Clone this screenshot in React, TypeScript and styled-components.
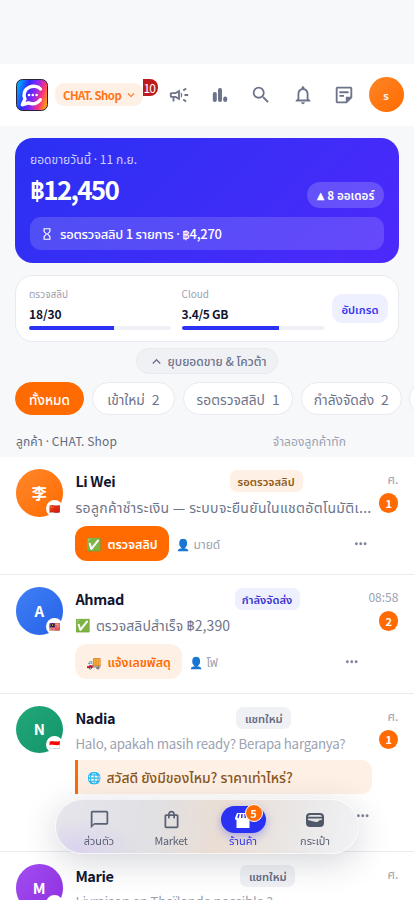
import React from "react";
import styled, { createGlobalStyle, css } from "styled-components";
import {
  MdOutlineCampaign, MdSearch, MdNotificationsNone, MdOutlineStickyNote2, MdHourglassEmpty,
  MdChatBubbleOutline, MdOutlineShoppingBag, MdExpandMore, MdExpandLess, MdMoreHoriz,
} from "react-icons/md";

const Global = createGlobalStyle`
  * { box-sizing: border-box; }
  html, body { margin: 0; padding: 0; background: #f7f8fa; }
  body { width: 414px; height: 900px; overflow: hidden; font-family: "Noto Sans CJK SC", "Noto Sans Thai", "Noto Sans", sans-serif; }
`;

const Screen = styled.main`
  width: 414px; height: 900px; overflow: hidden; padding-top: 64px;
  display: flex; flex-direction: column; background: #f7f8fa; position: relative;
`;

const Text = styled.span<{ $size: number; $color?: string; $weight?: number; $track?: number }>`
  font-size: ${p => p.$size}px;
  line-height: 20px;
  color: ${p => p.$color ?? "inherit"};
  font-weight: ${p => p.$weight ?? 400};
  letter-spacing: ${p => p.$track ?? 0}px;
  white-space: nowrap;
`;
const Symbol = styled.span`
  font-family: "Noto Sans", "DejaVu Sans", sans-serif;
`;
const Triangle = styled.span`
  font: 10px "DejaVu Sans", sans-serif; margin-right: 3px;
`;

const Header = styled.header`
  height: 61.5px; flex: none; display: flex; align-items: center; background: #fff; padding: 0 10.5px 0 16px;
`;
const ShopPill = styled.button`
  width: 88px; height: 23px; flex: none; margin-left: 7px; padding: 0 5px 0 8px; border: 0; border-radius: 9px;
  display: flex; align-items: center; justify-content: space-between; background: #fff0e5; color: #ff7417; font-family: inherit;
  & > svg { flex: none; }
`;
const Alert = styled.div`
  width: 15px; height: 17px; margin-top: -14px; background: #bd1a1d; border-radius: 0 8px 8px 0;
  display: flex; align-items: center; justify-content: flex-end; padding-right: 3px; flex: none;
`;
const HeaderIcons = styled.nav`
  flex: 1; margin-left: 10px; display: flex; gap: 19.2px; align-items: center; color: #6d7489; font-size: 22px;
  & > svg { flex: none; }
`;
const Me = styled.div`
  width: 35px; height: 35px; border-radius: 50%; background: linear-gradient(135deg, #ff8526, #ff6b00); color: #fff;
  display: flex; align-items: center; justify-content: center; flex: none;
`;

const Hero = styled.section`
  height: 124.5px; flex: none; margin: 12.5px 15px 0; padding: 11px 15px; border-radius: 18px;
  background: linear-gradient(135deg, #2a31f2, #4d29fb); display: flex; flex-direction: column; color: #fff;
`;
const HeroRow = styled.div`
  display: flex; justify-content: space-between; align-items: flex-start; height: 47px;
`;
const Amount = styled.div`
  font-size: 26px; font-weight: 700; line-height: 37px; letter-spacing: -1.75px; white-space: nowrap;
`;
const Orders = styled.div`
  width: 77px; height: 26px; margin-top: 12px; border-radius: 13px; background: rgba(255,255,255,.18);
  display: flex; align-items: center; justify-content: center;
`;
const Pending = styled.div`
  height: 33px; border-radius: 11px; background: rgba(255,255,255,.15); display: flex; align-items: center; padding-left: 10px; gap: 6px;
`;

const Quota = styled.section`
  height: 67px; flex: none; margin: 12.5px 15px 0; padding: 0 10px 0 13px; background: #fff; border: 1px solid #e8eaf0; border-radius: 18px;
  display: flex; align-items: center;
`;
const Meter = styled.div`
  width: 142px; margin-right: 10.5px; padding-bottom: 3px; display: flex; flex-direction: column;
`;
const Track = styled.div<{ $value: number }>`
  height: 4.5px; border-radius: 2px; margin-top: 2px;
  background: linear-gradient(to right, #2a31f2 ${p => p.$value}%, #f0f1f6 ${p => p.$value}%);
`;
const Upgrade = styled.button`
  width: 56px; height: 29px; flex: none; border: 0; border-radius: 10px; background: #eef0ff; padding: 0; margin-left: -2px; font-family: inherit;
`;
const Collapse = styled.button`
  width: 142px; height: 26px; flex: none; align-self: center; margin-top: 6px; border: 1px solid #e8eaf0; border-radius: 13px;
  background: #f0f1f5; color: #6d7489; display: flex; align-items: center; justify-content: center; gap: 3px; padding: 0; font-family: inherit;
`;
const Chips = styled.div`
  display: flex; gap: 7.7px; padding-left: 15px; margin-top: 8px; flex: none; overflow: hidden;
`;
const Chip = styled.div<{ $width: number; $active?: boolean }>`
  width: ${p => p.$width}px; height: 33px; flex: none; border-radius: 17px; display: flex; align-items: center; justify-content: center; gap: 7px;
  border: 1px solid ${p => (p.$active ? "#ff6b00" : "#e8eaf0")};
  background: ${p => (p.$active ? "#ff6b00" : "#fff")}; color: ${p => (p.$active ? "#fff" : "#6d7489")};
`;
const SectionHead = styled.div`
  height: 42px; flex: none; display: flex; justify-content: space-between; padding: 16px 68px 0 16px;
`;

const Row = styled.article<{ $height: number }>`
  height: ${p => p.$height}px; flex: none; background: #fff; border-bottom: 1px solid #e9ebf1;
  display: flex; padding: 12px 15.5px 0;
`;
const Avatar = styled.div<{ $from: string; $to: string }>`
  width: 47.5px; height: 47.5px; border-radius: 50%; flex: none; color: #fff; position: relative;
  background: linear-gradient(135deg, ${p => p.$from}, ${p => p.$to}); display: flex; align-items: center; justify-content: center;
`;
const Flag = styled.span`
  position: absolute; right: 0; bottom: 0; width: 17px; height: 17px; border-radius: 50%; background: #fff;
  display: flex; align-items: center; justify-content: center; font-size: 9px;
`;
const Body = styled.div`
  width: 297px; margin-left: 12.4px; flex: none; display: flex; flex-direction: column;
`;
const NameLine = styled.div`
  display: flex; align-items: center; justify-content: space-between; height: 24px;
`;
const Tag = styled.span<{ $width: number; $right: number; $bg: string }>`
  width: ${p => p.$width}px; height: 22px; margin-right: ${p => p.$right}px; border-radius: 7px; background: ${p => p.$bg};
  display: flex; align-items: center; justify-content: center;
`;
const Message = styled.div`
  height: 28px; display: flex; align-items: center; gap: 4.5px;
`;
const Actions = styled.div`
  display: flex; align-items: center; margin-top: 5px; height: 35px;
`;
const Action = styled.button<{ $width: number; $soft?: boolean }>`
  width: ${p => p.$width}px; height: 35px; border: 0; border-radius: 12px; display: flex; align-items: center; padding: 0 0 0 10.5px; gap: 5.5px;
  background: ${p => (p.$soft ? "#fff0e5" : "#ff6b00")}; color: ${p => (p.$soft ? "#ff6b00" : "#fff")}; font-family: inherit;
`;
const Agent = styled.span`
  display: flex; align-items: center; gap: 3px; margin-left: 7.5px; flex: 1;
`;
const More = styled.span<{ $right: number }>`
  margin-right: ${p => p.$right}px; color: #7f869a; font-size: 17.5px; display: flex;
`;
const Quote = styled.div`
  height: 34px; border-left: 3px solid #ff6b00; border-radius: 0 10px 10px 0; background: #fff0e5;
  display: flex; align-items: center; padding-left: 9px; gap: 5px; margin-top: 2px;
`;
const Side = styled.div`
  width: 34px; margin-left: -8px; flex: none; display: flex; flex-direction: column; align-items: flex-end;
`;
const Count = styled.span`
  width: 19.5px; height: 19.5px; margin-top: 4px; border-radius: 50%; background: #ff6b00; color: #fff; display: flex; align-items: center; justify-content: center;
`;

const Dock = styled.nav`
  position: absolute; left: 55px; top: 799px; width: 304px; height: 55px; border-radius: 28px; padding: 0 7px;
  display: flex; border: 1px solid rgba(255,255,255,.65);
  background:
    radial-gradient(ellipse 60px 30px at 22px 48px, rgba(212,200,240,.6), transparent),
    linear-gradient(100deg, rgba(226,225,232,.86), rgba(220,220,225,.88) 30%, rgba(232,218,207,.9) 55%, rgba(232,229,229,.9) 80%, rgba(240,241,244,.92));
  backdrop-filter: blur(14px); box-shadow: 0 8px 34px rgba(30,35,60,.19);
`;
const DockItem = styled.div<{ $active?: boolean }>`
  flex: 1; display: flex; flex-direction: column; align-items: center; padding-top: 6px; color: ${p => (p.$active ? "#3838ef" : "#596174")};
  & > span { margin-top: -3.5px; }
`;
const DockIcon = styled.div<{ $active?: boolean }>`
  width: 45px; height: 27px; border-radius: 14px; flex: none; display: flex; align-items: center; justify-content: center; font-size: 21px; position: relative;
  ${p => p.$active && css`background: #2a31f2; color: #fff; box-shadow: 0 3px 10px rgba(42,49,242,.35);`}
`;
const DockBadge = styled.span`
  position: absolute; left: 24px; top: -2.5px; width: 18px; height: 18px; border-radius: 50%; border: 1px solid #fff; background: #ff6b00;
  display: flex; align-items: center; justify-content: center;
`;

const Logo = () => (
  <svg width="32" height="32" viewBox="0 0 32 32">
    <defs>
      <linearGradient id="logo" x1="0" y1=".35" x2="1" y2=".65">
        <stop offset="0" stopColor="#00a9ff" /><stop offset=".3" stopColor="#2d2cff" />
        <stop offset=".58" stopColor="#9427f0" /><stop offset=".8" stopColor="#ff3475" /><stop offset="1" stopColor="#ff9b16" />
      </linearGradient>
    </defs>
    <rect x=".5" y=".5" width="31" height="31" rx="6" fill="url(#logo)" stroke="#28233b" />
    <path d="M24.500 10C22 7 17 6.500 13.200 8.300C8.200 10.700 6.800 16.100 9 20.100L6.300 25.800L12.200 23.800C16.800 25.600 21.500 24.300 24.300 20.700" fill="none" stroke="#fff" strokeWidth="3.400" strokeLinecap="round" strokeLinejoin="round" />
    <circle cx="13" cy="16" r="1.300" fill="#fff" /><circle cx="16.800" cy="16" r="1.300" fill="#fff" /><circle cx="20.600" cy="16" r="1.300" fill="#fff" />
  </svg>
);
const Bars = () => (
  <svg width="22" height="22" viewBox="0 0 22 22" fill="currentColor">
    <rect x="3.800" y="8" width="4" height="10" rx="1.900" /><rect x="9" y="4" width="4" height="14" rx="1.900" /><rect x="14.200" y="12.500" width="4" height="5.500" rx="1.900" />
  </svg>
);
const Store = () => (
  <svg width="20" height="18" viewBox="0 0 20 18">
    <path d="M4 2h12l2 5c0 1.400-.8 2-1.500 2v8h-13V9C2.800 9 2 8.400 2 7z" fill="#fff" />
    <path d="M6 3L5 7M9 3L8.700 7M12 3l.3 4" stroke="#2a31f2" strokeWidth="1.500" />
  </svg>
);
const Wallet = () => (
  <svg width="18" height="16" viewBox="0 0 18 16">
    <rect x="0" y="1" width="18" height="14" rx="4" fill="#505969" />
    <path d="M2 4.800q.4-1.800 2-1.800h10q1.600 0 2 1.800zM2 6.400h14v1.300q-3 .2-4 1.700-.8 1-2.200.5L2 8z" fill="#e4e3e5" />
  </svg>
);

type Customer = {
  name: string; initial: string; flag: string; from: string; to: string; height: number; tag: string; tagW: number; tagR: number; tagBg: string; tagColor: string;
  time: string; count?: number; message: React.ReactNode; extra?: React.ReactNode;
};
const customers: Customer[] = [
  { name: "Li Wei", initial: "李", flag: "🇨🇳", from: "#ff872b", to: "#ff6b00", height: 118, tag: "รอตรวจสลิป", tagW: 73, tagR: 69.8, tagBg: "#fff0e5", tagColor: "#915b16", time: "ศ.", count: 1,
    message: <Text $size={14} $track={0.32} $color="#6d7489">รอลูกค้าชำระเงิน — ระบบจะยืนยันในแชตอัตโนมัติเ...</Text>,
    extra: <Actions><Action $width={93.5}><Text $size={12.5}>✅</Text><Text $size={12.5} $weight={600}>ตรวจสลิป</Text></Action><Agent><Text $size={11.5}>👤</Text><Text $size={12} $color="#9ca2b1">มายด์</Text></Agent><More $right={2.5}><MdMoreHoriz /></More></Actions> },
  { name: "Ahmad", initial: "A", flag: "🇲🇾", from: "#4080f5", to: "#2561e8", height: 118.5, tag: "กำลังจัดส่ง", tagW: 65, tagR: 72.8, tagBg: "#eef0ff", tagColor: "#3636cc", time: "08:58", count: 2,
    message: <><Text $size={12.5}>✅</Text><Text $size={14} $track={0.08} $color="#6d7489">ตรวจสลิปสำเร็จ ฿2,390</Text></>,
    extra: <Actions><Action $width={106.5} $soft><Text $size={12.5}>🚚</Text><Text $size={12.4} $weight={600}>แจ้งเลขพัสดุ</Text></Action><Agent><Text $size={11.5}>👤</Text><Text $size={12} $color="#9ca2b1">โฟ</Text></Agent><More $right={12.3}><MdMoreHoriz /></More></Actions> },
  { name: "Nadia", initial: "N", flag: "🇮🇩", from: "#23a879", to: "#12946a", height: 158.5, tag: "แชทใหม่", tagW: 55, tagR: 81.1, tagBg: "#f0f1f5", tagColor: "#646b80", time: "ศ.", count: 1,
    message: <Text $size={13.3} $track={-0.23} $color="#9ca2b1">Halo, apakah masih ready? Berapa harganya?</Text>,
    extra: <><Quote><Text $size={11.5}>🌐</Text><Text $size={13.9} $weight={500} $color="#89571d">สวัสดี ยังมีของไหม? ราคาเท่าไหร่?</Text></Quote><Actions><Agent /><More $right={0.5}><MdMoreHoriz /></More></Actions></> },
  { name: "Marie", initial: "M", flag: "🇫🇷", from: "#a34df2", to: "#8d30df", height: 118, tag: "แชทใหม่", tagW: 55, tagR: 77.1, tagBg: "#f0f1f5", tagColor: "#646b80", time: "ศ.",
    message: <Text $size={13.3} $track={-0.2} $color="#9ca2b1">Livraison en Thaïlande possible ?</Text> },
];

export default function App() {
  return (
    <>
      <Global />
      <Screen>
        <Header>
          <Logo />
          <ShopPill><Text $size={11.3} $weight={600} $track={-0.45}>CHAT. Shop</Text><MdExpandMore size={14} /></ShopPill>
          <Alert><Text $size={12} $color="#fff" $track={-0.9}>10</Text></Alert>
          <HeaderIcons><MdOutlineCampaign /><Bars /><MdSearch /><MdNotificationsNone /><MdOutlineStickyNote2 /></HeaderIcons>
          <Me><Text $size={11} $weight={600}>ร</Text></Me>
        </Header>
        <Hero>
          <Text $size={12} $color="#cdd0ff" $track={0.05}>ยอดขายวันนี้ <Symbol>·</Symbol> 11 ก.ย.</Text>
          <HeroRow><Amount>฿12,450</Amount><Orders><Triangle>▲</Triangle><Text $size={11.7} $weight={600}>8 ออเดอร์</Text></Orders></HeroRow>
          <Pending><MdHourglassEmpty size={14} /><Text $size={13} $weight={500} $track={-0.25}>รอตรวจสลิป 1 รายการ <Symbol>·</Symbol> ฿4,270</Text></Pending>
        </Hero>
        <Quota>
          <Meter><Text $size={10} $color="#9ca2b1">ตรวจสลิป</Text><Text $size={12} $weight={600} $track={-0.1} $color="#11152f">18/30</Text><Track $value={60} /></Meter>
          <Meter><Text $size={10} $color="#9ca2b1">Cloud</Text><Text $size={12} $weight={600} $track={-0.35} $color="#11152f">3.4/5 GB</Text><Track $value={68} /></Meter>
          <Upgrade><Text $size={11.3} $weight={600} $color="#3636ef">อัปเกรด</Text></Upgrade>
        </Quota>
        <Collapse><MdExpandLess size={17} /><Text $size={12} $weight={500}>ยุบยอดขาย &amp; โควต้า</Text></Collapse>
        <Chips>
          <Chip $width={69} $active><Text $size={13.6} $weight={500}>ทั้งหมด</Text></Chip>
          <Chip $width={83.5}><Text $size={13.8}>เข้าใหม่</Text><Text $size={14}>2</Text></Chip>
          <Chip $width={110.5}><Text $size={13.8}>รอตรวจสลิป</Text><Text $size={14}>1</Text></Chip>
          <Chip $width={100.5}><Text $size={13.8}>กำลังจัดส่ง</Text><Text $size={14}>2</Text></Chip>
          <Chip $width={80} />
        </Chips>
        <SectionHead><Text $size={12} $color="#646b80" $track={0.13}>ลูกค้า <Symbol>·</Symbol> CHAT. Shop</Text><Text $size={12} $track={0.1} $color="#9ca2b1">จำลองลูกค้าทัก</Text></SectionHead>
        {customers.map(c => (
          <Row key={c.name} $height={c.height}>
            <Avatar $from={c.from} $to={c.to}><Text $size={15} $weight={700}>{c.initial}</Text><Flag>{c.flag}</Flag></Avatar>
            <Body>
              <NameLine><Text $size={14.5} $weight={600} $track={-0.4} $color="#11152f">{c.name}</Text><Tag $width={c.tagW} $right={c.tagR} $bg={c.tagBg}><Text $size={11.2} $weight={600} $color={c.tagColor}>{c.tag}</Text></Tag></NameLine>
              <Message>{c.message}</Message>
              {c.extra}
            </Body>
            <Side><Text $size={12} $color="#9ca2b1">{c.time}</Text>{c.count && <Count><Text $size={11} $weight={600}>{c.count}</Text></Count>}</Side>
          </Row>
        ))}
        <Dock>
          <DockItem><DockIcon><MdChatBubbleOutline /></DockIcon><Text $size={10.8}>ส่วนตัว</Text></DockItem>
          <DockItem><DockIcon><MdOutlineShoppingBag /></DockIcon><Text $size={10.8} $track={-0.25}>Market</Text></DockItem>
          <DockItem $active><DockIcon $active><Store /><DockBadge><Text $size={11} $weight={700}>5</Text></DockBadge></DockIcon><Text $size={11}>ร้านค้า</Text></DockItem>
          <DockItem><DockIcon><Wallet /></DockIcon><Text $size={11}>กระเป๋า</Text></DockItem>
        </Dock>
      </Screen>
    </>
  );
}
